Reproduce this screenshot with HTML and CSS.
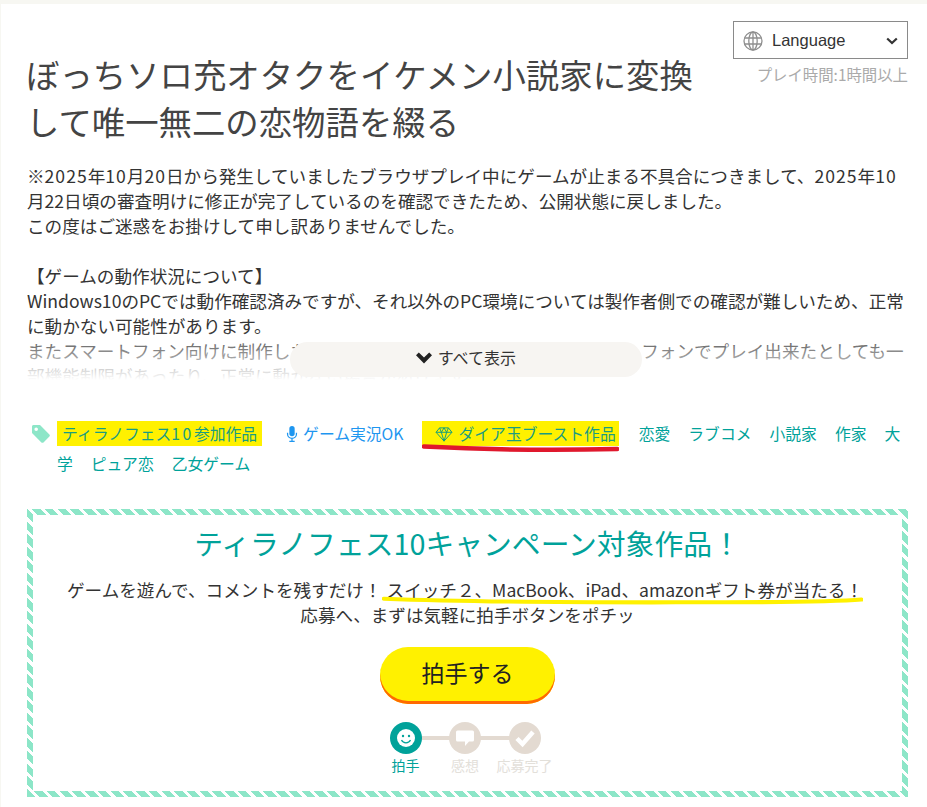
FILE: index.html
```html
<!DOCTYPE html>
<html lang="ja">
<head>
  <meta charset="utf-8">
  <title>ぼっちソロ充オタクをイケメン小説家に変換して唯一無二の恋物語を綴る</title>
  <link rel="stylesheet" href="styles.css">
</head>
<body>
  <div class="page">
    <header class="game-header">
      <h1 class="game-title">ぼっちソロ充オタクをイケメン小説家に変換して唯一無二の恋物語を綴る</h1>
      <div class="game-meta">
        <div class="lang-select">
          <svg class="globe-icon" viewBox="0 0 20 20" fill="none" stroke="#8f8f8f" stroke-width="1.3">
            <circle cx="10" cy="10" r="9"/>
            <ellipse cx="10" cy="10" rx="4.2" ry="9"/>
            <path d="M10 1v18M1.6 7h16.8M1.6 13h16.8"/>
          </svg>
          <span class="lang-label">Language</span>
          <svg class="lang-arrow" viewBox="0 0 12 8" fill="none" stroke="#333" stroke-width="2.2">
            <path d="M1.2 1.5 6 6l4.8-4.5"/>
          </svg>
        </div>
        <div class="play-time">プレイ時間:1時間以上</div>
      </div>
    </header>

    <section class="description">
      <p>※<span class="num">2025</span>年<span class="num">10</span>月<span class="num">20</span>日から発生していましたブラウザプレイ中にゲームが止まる不具合につきまして、<span class="num">2025</span>年<span class="num">10</span><br>
      月22日頃の審査明けに修正が完了しているのを確認できたため、公開状態に戻しました。<br>
      この度はご迷惑をお掛けして申し訳ありませんでした。<br>
      <br>
      【ゲームの動作状況について】<br>
      Windows10のPCでは動作確認済みですが、それ以外のPC環境については製作者側での確認が難しいため、正常に動かない可能性があります。<br>
      またスマートフォン向けに制作したノベルゲームではないため、もしスマートフォンでプレイ出来たとしても一部機能制限があったり、正常に動かない場合があります。</p>
      <div class="fade"></div>
      <button class="show-all">
        <svg class="show-all-icon" viewBox="0 0 16 12" fill="#222"><path d="M0 3.2 2.8.6 8 5.6 13.2.6 16 3.2 8 11.4Z"/></svg>
        すべて表示
      </button>
    </section>

    <div class="tags">
      <svg class="tag-icon" viewBox="0 0 18 18" fill="#8de6c8"><path d="M0 1.5C0 .7.7 0 1.5 0H8l9.4 9.4c.6.6.6 1.5 0 2.1l-5.9 5.9c-.6.6-1.5.6-2.1 0L0 8Zm4.2 4.6a1.8 1.8 0 1 0 0-3.6 1.8 1.8 0 0 0 0 3.6Z"/></svg>
      <div class="tag-list">
        <a class="tag tag-mark tag-fes">ティラノフェス<span class="num-wide">10</span>参加作品</a><a class="tag tag-blue"><svg class="mic-icon" viewBox="0 0 12 18" fill="#1e96f0"><rect x="3" y="0" width="6" height="11.5" rx="3"/><path d="M1 7.5v1.5a5 5 0 0 0 10 0V7.5" fill="none" stroke="#1e96f0" stroke-width="1.4"/><path d="M6 14v3M3 17.2h6" stroke="#1e96f0" stroke-width="1.4"/></svg>ゲーム実況OK</a><a class="tag tag-mark tag-boost"><svg class="diamond-icon" viewBox="0 0 20 17" fill="none" stroke="#0f9d80" stroke-width="1.1"><path d="M5 1h10l4 5-9 10L1 6ZM1 6h18M7 6l3 10 3-10M5 1l2 5 3-5 3 5 2-5"/></svg>ダイア玉ブースト作品<svg class="red-line" viewBox="0 0 200 8" preserveAspectRatio="none"><path d="M2 2.5C50 5 130 6.5 198 5" stroke="#e0182d" stroke-width="4.5" stroke-linecap="round" fill="none"/></svg></a><a class="tag">恋愛</a><a class="tag">ラブコメ</a><a class="tag">小説家</a><a class="tag">作家</a><a class="tag">大学</a><a class="tag">ピュア恋</a><a class="tag">乙女ゲーム</a>
      </div>
    </div>

    <section class="campaign">
      <h2 class="campaign-title">ティラノフェス10キャンペーン対象作品！</h2>
      <p class="campaign-text">ゲームを遊んで、コメントを残すだけ！<span class="prize">スイッチ２、MacBook、iPad、amazonギフト券が当たる！<svg class="yellow-line" viewBox="0 0 484 10" preserveAspectRatio="none"><path d="M2 3C120 8 250 7 330 7 390 7 450 7 482 4" stroke="#fff100" stroke-width="4.5" stroke-linecap="round" fill="none"/></svg></span><br>応募へ、まずは気軽に拍手ボタンをポチッ</p>
      <button class="clap-button">拍手する</button>
      <ol class="steps">
        <li class="step step-active">
          <span class="step-circle">
            <svg viewBox="0 0 20 20" width="20" height="20"><circle cx="10" cy="10" r="9" fill="#fff"/><circle cx="7" cy="8" r="1.2" fill="#00a29a"/><circle cx="13" cy="8" r="1.2" fill="#00a29a"/><path d="M5.5 12a5 5 0 0 0 9 0" fill="none" stroke="#00a29a" stroke-width="1.2"/></svg>
          </span>
          <span class="step-label">拍手</span>
        </li>
        <li class="step">
          <span class="step-circle">
            <svg viewBox="0 0 22 20" width="22" height="20"><path d="M3.5 2.5h15a1.5 1.5 0 0 1 1.5 1.5v8a1.5 1.5 0 0 1-1.5 1.5H15l-4 4.5v-4.5H3.5A1.5 1.5 0 0 1 2 12V4a1.5 1.5 0 0 1 1.5-1.5Z" fill="#fff"/></svg>
          </span>
          <span class="step-label">感想</span>
        </li>
        <li class="step">
          <span class="step-circle">
            <svg viewBox="0 0 22 20" width="22" height="20"><path d="M3 10.5 8.5 16 19 4" fill="none" stroke="#fff" stroke-width="4.5"/></svg>
          </span>
          <span class="step-label">応募完了</span>
        </li>
      </ol>
    </section>
  </div>
</body>
</html>
```

FILE: styles.css
```css
html, body {
  margin: 0;
  height: 807px;
  overflow: hidden;
}
body {
  font-family: "Noto Sans CJK JP", "Noto Sans", sans-serif;
  background-color: #f7f7f2;
  color: #333;
  padding-top: 4px;
  box-sizing: border-box;
}
.page {
  background: #fff;
  margin-left: 1px;
  height: 803px;
  padding: 17px 19px 0 26px;
  box-sizing: border-box;
}

.game-header {
  display: flex;
  justify-content: space-between;
  align-items: flex-start;
}
.game-title {
  width: 680px;
  margin: 29px 0 0 -1px;
  font-size: 33.4px;
  line-height: 47px;
  font-weight: 400;
  color: #444;
}
.game-meta {
  width: 175px;
}
.lang-select {
  display: flex;
  align-items: center;
  height: 38px;
  border: 1px solid #8a8a8a;
  box-sizing: border-box;
  padding: 1px 9px 0;
  font-family: "Liberation Sans", sans-serif;
  font-size: 16.5px;
  color: #333;
}
.globe-icon {
  width: 20px;
  height: 20px;
}
.lang-label {
  margin-left: 9px;
  flex: 1;
}
.lang-arrow {
  width: 12px;
  height: 8px;
}
.play-time {
  margin-top: 5px;
  text-align: right;
  font-size: 15.4px;
  line-height: 20px;
  color: #aaa;
}

.description {
  position: relative;
  height: 217px;
  margin-top: 19px;
  overflow: hidden;
}
.description p {
  margin: 0;
  font-size: 17.6px;
  line-height: 25px;
}
.num {
  letter-spacing: 1px;
}
.fade {
  position: absolute;
  left: 0;
  right: 0;
  bottom: 0;
  height: 50px;
  background: linear-gradient(rgba(255, 255, 255, 0), #fff);
}
.show-all {
  position: absolute;
  left: 263px;
  bottom: 3px;
  width: 352px;
  height: 35px;
  padding: 0 0 5px 0;
  border: none;
  border-radius: 18px;
  background: #f7f5f2;
  color: #333;
  font-family: inherit;
  font-size: 16px;
}
.show-all-icon {
  width: 16px;
  height: 12px;
  margin-right: 2px;
}

.tags {
  display: flex;
  margin-top: 39px;
  padding-left: 5px;
  font-size: 15.8px;
  line-height: 29.5px;
  color: #00a29a;
}
.tag-icon {
  flex: none;
  width: 18px;
  height: 18px;
  margin: 6px 7px 0 0;
}
.tag-list {
  flex: 1;
}
.tag {
  margin-right: 18px;
}
.tag-mark {
  display: inline-block;
  background: #fff100;
  padding: 0 5px;
  height: 25px;
  line-height: 25px;
  color: #1a9c80;
}
.tag-fes {
  margin-right: 24px;
}
.num-wide {
  letter-spacing: 2.5px;
}
.tag-blue {
  color: #1e96f0;
}
.mic-icon {
  width: 12px;
  height: 16px;
  margin-right: 5px;
  vertical-align: -2px;
}
.tag-boost {
  position: relative;
  padding: 0 3px 0 13px;
  margin-right: 20px;
}
.diamond-icon {
  width: 18px;
  height: 15px;
  margin-right: 6px;
  vertical-align: -2px;
}
.red-line {
  position: absolute;
  left: 0;
  bottom: -6px;
  width: 100%;
  height: 8px;
}

.campaign {
  margin-top: 31px;
  border: 6px solid transparent;
  background:
    linear-gradient(#fff, #fff) padding-box,
    repeating-linear-gradient(45deg, #8de6c8 0 6px, #fff 6px 9px) border-box;
  height: 288px;
  box-sizing: border-box;
  text-align: center;
}
.campaign-title {
  margin: 6px 0 0 0;
  font-size: 28.8px;
  line-height: 44px;
  font-weight: 400;
  color: #00a29a;
}
.campaign-text {
  margin: 12px 0 0 0;
  font-size: 17.6px;
  line-height: 25px;
}
.prize {
  position: relative;
  margin: 0 5px;
}
.yellow-line {
  position: absolute;
  left: -5px;
  bottom: -3px;
  width: calc(100% + 5px);
  height: 9px;
}
.clap-button {
  display: block;
  width: 175px;
  height: 57px;
  margin: 20px auto 0;
  padding: 0 0 8px 0;
  border: none;
  border-radius: 28px;
  background: #fff100;
  box-shadow: inset 0 -3px 0 #ff6a00;
  font-family: inherit;
  font-size: 23px;
  color: #222;
}
.steps {
  display: flex;
  justify-content: center;
  list-style: none;
  margin: 18px 0 0 0;
  padding: 0 5px 0 0;
}
.step {
  position: relative;
  display: flex;
  flex-direction: column;
  align-items: center;
  width: 59.5px;
  color: #e3e0da;
  font-size: 14px;
}
.step + .step::before {
  content: "";
  position: absolute;
  top: 14px;
  left: -30px;
  width: 60px;
  height: 4px;
  background: #e3dad1;
}
.step-circle {
  position: relative;
  z-index: 1;
  display: flex;
  align-items: center;
  justify-content: center;
  width: 32px;
  height: 32px;
  border-radius: 50%;
  background: #e3dad1;
}
.step-active {
  color: #00a29a;
}
.step-active .step-circle {
  background: #00a29a;
}
.step-label {
  margin-top: 0;
  line-height: 22px;
  white-space: nowrap;
}
```
